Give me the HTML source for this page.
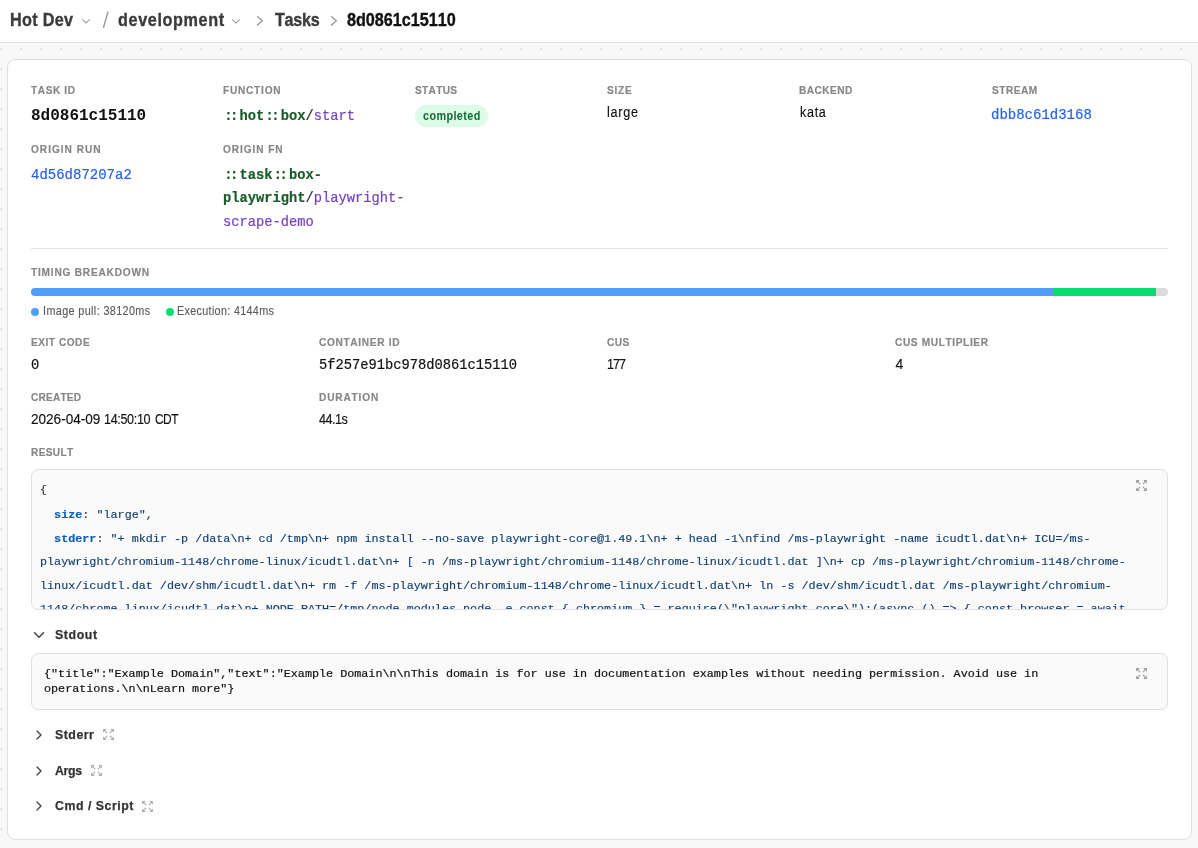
<!DOCTYPE html>
<html><head><meta charset="utf-8">
<style>
html,body{margin:0;padding:0;}
body{width:1198px;height:848px;position:relative;overflow:hidden;background-color:#f8f8f8;
 background-image:radial-gradient(circle at 10px 10px,#e2e2e2 0,#e2e2e2 0.9px,rgba(226,226,226,0) 1.3px);
 background-size:20px 20px;background-position:11px 39px;
 font-family:"Liberation Sans",sans-serif;}
.hdr{position:absolute;left:0;top:0;width:1198px;height:42px;background:#fff;border-bottom:1px solid #e2e2e2;}
.card{position:absolute;left:7px;top:59px;width:1183px;height:779px;background:#fff;border:1px solid #dfdfdf;border-radius:8px;}
.t{position:absolute;white-space:pre;}
.t b{font-weight:700;}
.sep{position:absolute;left:31px;top:248px;width:1137px;height:1px;background:#e5e5e5;}
.badge{position:absolute;left:415px;top:105px;width:73px;height:22px;border-radius:11px;background:#dcfce7;}
.bar{position:absolute;left:31px;top:288px;width:1137px;height:8px;border-radius:4px;background:#dcdcdc;overflow:hidden;}
.bar .b1{position:absolute;left:0;top:0;width:1023px;height:8px;background:#4f9ffa;}
.bar .b2{position:absolute;left:1023px;top:0;width:102px;height:8px;background:#08de6f;}
.dot{position:absolute;width:8px;height:8px;border-radius:4px;}
.box{position:absolute;left:31px;width:1135px;background:#fafafa;border:1px solid #e0e0e0;border-radius:7px;overflow:hidden;}
.cl{position:absolute;left:8px;white-space:pre;-webkit-text-stroke:0.15px currentColor;font-family:"Liberation Mono",monospace;font-size:11.75px;line-height:23.4px;}
.cl b{font-weight:700;}
svg{position:absolute;overflow:visible;}
</style></head><body>
<div id="wrap" style="position:absolute;left:0;top:0;width:1198px;height:848px;will-change:transform;">
<div class="hdr"></div>
<svg style="left:0;top:0" width="1198" height="42" viewBox="0 0 1198 42">
  <polyline points="82.6,19.6 86,23 89.4,19.6" fill="none" stroke="#a3a3a3" stroke-width="1.1" stroke-linecap="round" stroke-linejoin="round"/>
  <line x1="107.9" y1="11.9" x2="103.6" y2="27.2" stroke="#9e9e9e" stroke-width="1.5" stroke-linecap="round"/>
  <polyline points="232.4,19.6 235.9,23.1 239.4,19.6" fill="none" stroke="#a3a3a3" stroke-width="1.1" stroke-linecap="round" stroke-linejoin="round"/>
  <polyline points="257.6,16.7 262.3,20.8 257.6,24.9" fill="none" stroke="#9e9e9e" stroke-width="1.5" stroke-linecap="round" stroke-linejoin="round"/>
  <polyline points="331.7,16.7 336.4,20.8 331.7,24.9" fill="none" stroke="#9e9e9e" stroke-width="1.5" stroke-linecap="round" stroke-linejoin="round"/>
</svg>
<div class="card"></div>
<div class="sep"></div>
<div class="badge"></div>
<div class="bar"><div class="b1"></div><div class="b2"></div></div>
<div class="dot" style="left:31px;top:308px;background:#4f9ffa"></div>
<div class="dot" style="left:166px;top:308px;background:#08de6f"></div>
<div class="box" style="top:469px;height:139px;">
<div style="position:absolute;left:0;top:0;width:1135px;height:139px;" id="codewrap">
<div class="cl" style="top:10.90px"><span style="color:#333;position:relative;top:-2px">{</span></div>
<div class="cl" style="top:34.30px">  <b style="color:#0b5cc0">size</b><span style="color:#333">:</span><span style="color:#123f6e"> &quot;large&quot;,</span></div>
<div class="cl" style="top:57.70px">  <b style="color:#0b5cc0">stderr</b><span style="color:#333">:</span><span style="color:#123f6e"> &quot;+ mkdir -p /data\n+ cd /tmp\n+ npm install --no-save playwright-core@1.49.1\n+ + head -1\nfind /ms-playwright -name icudtl.dat\n+ ICU=/ms-</span></div>
<div class="cl" style="top:81.10px"><span style="color:#123f6e">playwright/chromium-1148/chrome-linux/icudtl.dat\n+ [ -n /ms-playwright/chromium-1148/chrome-linux/icudtl.dat ]\n+ cp /ms-playwright/chromium-1148/chrome-</span></div>
<div class="cl" style="top:104.50px"><span style="color:#123f6e">linux/icudtl.dat /dev/shm/icudtl.dat\n+ rm -f /ms-playwright/chromium-1148/chrome-linux/icudtl.dat\n+ ln -s /dev/shm/icudtl.dat /ms-playwright/chromium-</span></div>
<div class="cl" style="top:127.90px"><span style="color:#123f6e">1148/chrome-linux/icudtl.dat\n+ NODE_PATH=/tmp/node_modules node -e const { chromium } = require(\&quot;playwright-core\&quot;);(async () =&gt; { const browser = await</span></div>
</div>
</div>
<div class="box" style="top:653px;height:55px;"></div>
<svg style="left:1135.35px;top:479.25px" width="13" height="13" viewBox="0 0 24 24" fill="none" stroke="#9a9a9a" stroke-width="1.9" stroke-linecap="round" stroke-linejoin="round"><path d="m21 21-6-6m6 6v-4m0 4h-4"/><path d="M3 17V21m0 0h4M3 21l6-6"/><path d="M21 7V3m0 0h-4M21 3l-6 6"/><path d="M3 7V3m0 0h4M3 3l6 6"/></svg>
<svg style="left:1135.3px;top:667.2px" width="13" height="13" viewBox="0 0 24 24" fill="none" stroke="#9a9a9a" stroke-width="1.9" stroke-linecap="round" stroke-linejoin="round"><path d="m21 21-6-6m6 6v-4m0 4h-4"/><path d="M3 17V21m0 0h4M3 21l6-6"/><path d="M21 7V3m0 0h-4M21 3l-6 6"/><path d="M3 7V3m0 0h4M3 3l6 6"/></svg>
<svg style="left:29.9px;top:626px" width="18" height="18" viewBox="0 0 24 24" fill="none" stroke="#444" stroke-width="2" stroke-linecap="round" stroke-linejoin="round"><path d="m6 9 6 6 6-6"/></svg>
<svg style="left:31.15px;top:726.75px" width="16" height="16" viewBox="0 0 24 24" fill="none" stroke="#444" stroke-width="2" stroke-linecap="round" stroke-linejoin="round"><path d="m9 18 6-6-6-6"/></svg>
<svg style="left:31.15px;top:762.7px" width="16" height="16" viewBox="0 0 24 24" fill="none" stroke="#444" stroke-width="2" stroke-linecap="round" stroke-linejoin="round"><path d="m9 18 6-6-6-6"/></svg>
<svg style="left:31.15px;top:797.8px" width="16" height="16" viewBox="0 0 24 24" fill="none" stroke="#444" stroke-width="2" stroke-linecap="round" stroke-linejoin="round"><path d="m9 18 6-6-6-6"/></svg>
<svg style="left:102.4px;top:728.4px" width="13" height="13" viewBox="0 0 24 24" fill="none" stroke="#ababab" stroke-width="1.9" stroke-linecap="round" stroke-linejoin="round"><path d="m21 21-6-6m6 6v-4m0 4h-4"/><path d="M3 17V21m0 0h4M3 21l6-6"/><path d="M21 7V3m0 0h-4M21 3l-6 6"/><path d="M3 7V3m0 0h4M3 3l6 6"/></svg>
<svg style="left:90.25px;top:764.2px" width="13" height="13" viewBox="0 0 24 24" fill="none" stroke="#ababab" stroke-width="1.9" stroke-linecap="round" stroke-linejoin="round"><path d="m21 21-6-6m6 6v-4m0 4h-4"/><path d="M3 17V21m0 0h4M3 21l6-6"/><path d="M21 7V3m0 0h-4M21 3l-6 6"/><path d="M3 7V3m0 0h4M3 3l6 6"/></svg>
<svg style="left:141.35px;top:799.5px" width="13" height="13" viewBox="0 0 24 24" fill="none" stroke="#ababab" stroke-width="1.9" stroke-linecap="round" stroke-linejoin="round"><path d="m21 21-6-6m6 6v-4m0 4h-4"/><path d="M3 17V21m0 0h4M3 21l6-6"/><path d="M21 7V3m0 0h-4M21 3l-6 6"/><path d="M3 7V3m0 0h4M3 3l6 6"/></svg>
<div class="t" id="e1" style="left:10.32px;top:9.00px;font-family:'Liberation Sans', sans-serif;font-size:18px;line-height:22px;font-weight:700;color:#3b3b3b;letter-spacing:0.342px;transform:scaleX(0.9);transform-origin:0 0;font-kerning:none;-webkit-text-stroke:0.35px currentColor;">Hot Dev</div>
<div class="t" id="e2" style="left:117.74px;top:9.00px;font-family:'Liberation Sans', sans-serif;font-size:18px;line-height:22px;font-weight:700;color:#3b3b3b;letter-spacing:0.682px;transform:scaleX(0.9);transform-origin:0 0;font-kerning:none;-webkit-text-stroke:0.35px currentColor;">development</div>
<div class="t" id="e3" style="left:275.22px;top:9.00px;font-family:'Liberation Sans', sans-serif;font-size:18px;line-height:22px;font-weight:700;color:#3b3b3b;letter-spacing:-0.358px;transform:scaleX(0.9);transform-origin:0 0;font-kerning:none;-webkit-text-stroke:0.35px currentColor;">Tasks</div>
<div class="t" id="e4" style="left:346.99px;top:9.00px;font-family:'Liberation Sans', sans-serif;font-size:18px;line-height:22px;font-weight:700;color:#111;letter-spacing:-0.033px;transform:scaleX(0.9);transform-origin:0 0;font-kerning:none;-webkit-text-stroke:0.35px currentColor;">8d0861c15110</div>
<div class="t" id="e5" style="left:31.29px;top:82.71px;font-family:'Liberation Sans', sans-serif;font-size:11.5px;line-height:14px;font-weight:700;color:#878787;letter-spacing:0.655px;transform:scaleX(0.88);transform-origin:0 0;font-kerning:none;-webkit-text-stroke:0.2px currentColor;">TASK ID</div>
<div class="t" id="e6" style="left:223.12px;top:82.71px;font-family:'Liberation Sans', sans-serif;font-size:11.5px;line-height:14px;font-weight:700;color:#878787;letter-spacing:0.857px;transform:scaleX(0.88);transform-origin:0 0;font-kerning:none;-webkit-text-stroke:0.2px currentColor;">FUNCTION</div>
<div class="t" id="e7" style="left:415.01px;top:82.71px;font-family:'Liberation Sans', sans-serif;font-size:11.5px;line-height:14px;font-weight:700;color:#878787;letter-spacing:0.365px;transform:scaleX(0.88);transform-origin:0 0;font-kerning:none;-webkit-text-stroke:0.2px currentColor;">STATUS</div>
<div class="t" id="e8" style="left:607.21px;top:82.71px;font-family:'Liberation Sans', sans-serif;font-size:11.5px;line-height:14px;font-weight:700;color:#878787;letter-spacing:0.869px;transform:scaleX(0.88);transform-origin:0 0;font-kerning:none;-webkit-text-stroke:0.2px currentColor;">SIZE</div>
<div class="t" id="e9" style="left:799.32px;top:82.71px;font-family:'Liberation Sans', sans-serif;font-size:11.5px;line-height:14px;font-weight:700;color:#878787;letter-spacing:0.493px;transform:scaleX(0.88);transform-origin:0 0;font-kerning:none;-webkit-text-stroke:0.2px currentColor;">BACKEND</div>
<div class="t" id="e10" style="left:991.51px;top:82.71px;font-family:'Liberation Sans', sans-serif;font-size:11.5px;line-height:14px;font-weight:700;color:#878787;letter-spacing:0.577px;transform:scaleX(0.88);transform-origin:0 0;font-kerning:none;-webkit-text-stroke:0.2px currentColor;">STREAM</div>
<div class="t" id="e11" style="left:31.08px;top:142.40px;font-family:'Liberation Sans', sans-serif;font-size:11.5px;line-height:14px;font-weight:700;color:#878787;letter-spacing:1.121px;transform:scaleX(0.88);transform-origin:0 0;font-kerning:none;-webkit-text-stroke:0.2px currentColor;">ORIGIN RUN</div>
<div class="t" id="e12" style="left:223.08px;top:142.40px;font-family:'Liberation Sans', sans-serif;font-size:11.5px;line-height:14px;font-weight:700;color:#878787;letter-spacing:1.039px;transform:scaleX(0.88);transform-origin:0 0;font-kerning:none;-webkit-text-stroke:0.2px currentColor;">ORIGIN FN</div>
<div class="t" id="e13" style="left:30.99px;top:265.00px;font-family:'Liberation Sans', sans-serif;font-size:11.5px;line-height:14px;font-weight:700;color:#878787;letter-spacing:0.897px;transform:scaleX(0.88);transform-origin:0 0;font-kerning:none;-webkit-text-stroke:0.2px currentColor;">TIMING BREAKDOWN</div>
<div class="t" id="e14" style="left:31.02px;top:335.21px;font-family:'Liberation Sans', sans-serif;font-size:11.5px;line-height:14px;font-weight:700;color:#878787;letter-spacing:0.587px;transform:scaleX(0.88);transform-origin:0 0;font-kerning:none;-webkit-text-stroke:0.2px currentColor;">EXIT CODE</div>
<div class="t" id="e15" style="left:319.08px;top:335.21px;font-family:'Liberation Sans', sans-serif;font-size:11.5px;line-height:14px;font-weight:700;color:#878787;letter-spacing:0.759px;transform:scaleX(0.88);transform-origin:0 0;font-kerning:none;-webkit-text-stroke:0.2px currentColor;">CONTAINER ID</div>
<div class="t" id="e16" style="left:607.08px;top:335.21px;font-family:'Liberation Sans', sans-serif;font-size:11.5px;line-height:14px;font-weight:700;color:#878787;letter-spacing:0.536px;transform:scaleX(0.88);transform-origin:0 0;font-kerning:none;-webkit-text-stroke:0.2px currentColor;">CUS</div>
<div class="t" id="e17" style="left:895.38px;top:335.21px;font-family:'Liberation Sans', sans-serif;font-size:11.5px;line-height:14px;font-weight:700;color:#878787;letter-spacing:0.711px;transform:scaleX(0.88);transform-origin:0 0;font-kerning:none;-webkit-text-stroke:0.2px currentColor;">CUS MULTIPLIER</div>
<div class="t" id="e18" style="left:31.28px;top:390.00px;font-family:'Liberation Sans', sans-serif;font-size:11.5px;line-height:14px;font-weight:700;color:#878787;letter-spacing:0.213px;transform:scaleX(0.88);transform-origin:0 0;font-kerning:none;-webkit-text-stroke:0.2px currentColor;">CREATED</div>
<div class="t" id="e19" style="left:318.82px;top:390.00px;font-family:'Liberation Sans', sans-serif;font-size:11.5px;line-height:14px;font-weight:700;color:#878787;letter-spacing:0.950px;transform:scaleX(0.88);transform-origin:0 0;font-kerning:none;-webkit-text-stroke:0.2px currentColor;">DURATION</div>
<div class="t" id="e20" style="left:31.02px;top:445.21px;font-family:'Liberation Sans', sans-serif;font-size:11.5px;line-height:14px;font-weight:700;color:#878787;letter-spacing:0.388px;transform:scaleX(0.88);transform-origin:0 0;font-kerning:none;-webkit-text-stroke:0.2px currentColor;">RESULT</div>
<div class="t" id="e21" style="left:31.00px;top:105.71px;font-family:'Liberation Mono', monospace;font-size:16px;line-height:20px;font-weight:700;color:#111;">8d0861c15110</div>
<div class="t" id="e22" style="left:223.00px;top:108.00px;font-family:'Liberation Mono', monospace;font-size:13.75px;line-height:17px;font-weight:400;color:#1a5c2a;-webkit-text-stroke:0.2px currentColor;"><span style="color:#1a5c2a"><b style="position:relative;left:1.3px">:</b><b style="position:relative;left:-1.3px">:</b></span><b style="color:#1a5c2a">hot</b><span style="color:#1a5c2a"><b style="position:relative;left:1.3px">:</b><b style="position:relative;left:-1.3px">:</b></span><b style="color:#1a5c2a">box</b><span style="color:#333">/</span><span style="color:#7443c4">start</span></div>
<div class="t" id="e23" style="left:422.68px;top:108.50px;font-family:'Liberation Sans', sans-serif;font-size:12px;line-height:15px;font-weight:700;color:#146a34;letter-spacing:0.448px;transform:scaleX(0.9);transform-origin:0 0;font-kerning:none;">completed</div>
<div class="t" id="e24" style="left:607.05px;top:102.71px;font-family:'Liberation Sans', sans-serif;font-size:14px;line-height:18px;font-weight:400;color:#111;letter-spacing:0.859px;transform:scaleX(0.9);transform-origin:0 0;font-kerning:none;-webkit-text-stroke:0.15px currentColor;">large</div>
<div class="t" id="e25" style="left:799.55px;top:102.71px;font-family:'Liberation Sans', sans-serif;font-size:14px;line-height:18px;font-weight:400;color:#111;letter-spacing:0.753px;transform:scaleX(0.9);transform-origin:0 0;font-kerning:none;-webkit-text-stroke:0.15px currentColor;">kata</div>
<div class="t" id="e26" style="left:991.00px;top:106.31px;font-family:'Liberation Mono', monospace;font-size:14px;line-height:18px;font-weight:400;color:#2463eb;-webkit-text-stroke:0.2px currentColor;">dbb8c61d3168</div>
<div class="t" id="e27" style="left:31.00px;top:166.00px;font-family:'Liberation Mono', monospace;font-size:14px;line-height:18px;font-weight:400;color:#2463eb;-webkit-text-stroke:0.2px currentColor;">4d56d87207a2</div>
<div class="t" id="e28" style="left:223.00px;top:166.50px;font-family:'Liberation Mono', monospace;font-size:13.75px;line-height:17px;font-weight:400;color:#1a5c2a;-webkit-text-stroke:0.2px currentColor;"><b style="position:relative;left:1.3px">:</b><b style="position:relative;left:-1.3px">:</b><b>task</b><b style="position:relative;left:1.3px">:</b><b style="position:relative;left:-1.3px">:</b><b>box-</b></div>
<div class="t" id="e29" style="left:223.00px;top:189.81px;font-family:'Liberation Mono', monospace;font-size:13.75px;line-height:17px;font-weight:400;color:#1a5c2a;-webkit-text-stroke:0.2px currentColor;"><b>playwright</b><span style="color:#333">/</span><span style="color:#7443c4">playwright-</span></div>
<div class="t" id="e30" style="left:223.00px;top:214.21px;font-family:'Liberation Mono', monospace;font-size:13.75px;line-height:17px;font-weight:400;color:#7443c4;-webkit-text-stroke:0.2px currentColor;">scrape-demo</div>
<div class="t" id="e31" style="left:42.80px;top:303.81px;font-family:'Liberation Sans', sans-serif;font-size:12px;line-height:15px;font-weight:400;color:#5c5c5c;letter-spacing:0.422px;transform:scaleX(0.9);transform-origin:0 0;font-kerning:none;-webkit-text-stroke:0.15px currentColor;">Image pull: 38120ms</div>
<div class="t" id="e32" style="left:177.11px;top:304.00px;font-family:'Liberation Sans', sans-serif;font-size:12px;line-height:15px;font-weight:400;color:#5c5c5c;letter-spacing:0.349px;transform:scaleX(0.9);transform-origin:0 0;font-kerning:none;-webkit-text-stroke:0.15px currentColor;">Execution: 4144ms</div>
<div class="t" id="e33" style="left:31.00px;top:356.81px;font-family:'Liberation Mono', monospace;font-size:13.75px;line-height:17px;font-weight:400;color:#111;-webkit-text-stroke:0.2px currentColor;">0</div>
<div class="t" id="e34" style="left:319.00px;top:356.90px;font-family:'Liberation Mono', monospace;font-size:13.75px;line-height:17px;font-weight:400;color:#111;-webkit-text-stroke:0.2px currentColor;">5f257e91bc978d0861c15110</div>
<div class="t" id="e35" style="left:606.74px;top:355.10px;font-family:'Liberation Sans', sans-serif;font-size:14px;line-height:18px;font-weight:400;color:#111;letter-spacing:-1.183px;transform:scaleX(0.9);transform-origin:0 0;font-kerning:none;-webkit-text-stroke:0.15px currentColor;">177</div>
<div class="t" id="e36" style="left:895.48px;top:354.60px;font-family:'Liberation Sans', sans-serif;font-size:14px;line-height:18px;font-weight:400;color:#111;-webkit-text-stroke:0.15px currentColor;">4</div>
<div class="t" id="e37" style="left:31.02px;top:409.81px;font-family:'Liberation Sans', sans-serif;font-size:14px;line-height:18px;font-weight:400;color:#111;letter-spacing:-0.016px;transform:scaleX(0.97);transform-origin:0 0;font-kerning:none;-webkit-text-stroke:0.15px currentColor;">2026-04-09</div>
<div class="t" id="e38" style="left:104.14px;top:409.81px;font-family:'Liberation Sans', sans-serif;font-size:14px;line-height:18px;font-weight:400;color:#111;letter-spacing:-0.396px;transform:scaleX(0.9);transform-origin:0 0;font-kerning:none;-webkit-text-stroke:0.15px currentColor;">14:50:10</div>
<div class="t" id="e39" style="left:154.60px;top:409.81px;font-family:'Liberation Sans', sans-serif;font-size:14px;line-height:18px;font-weight:400;color:#111;letter-spacing:-0.576px;transform:scaleX(0.85);transform-origin:0 0;font-kerning:none;-webkit-text-stroke:0.15px currentColor;">CDT</div>
<div class="t" id="e40" style="left:319.21px;top:409.71px;font-family:'Liberation Sans', sans-serif;font-size:14px;line-height:18px;font-weight:400;color:#111;letter-spacing:-0.550px;transform:scaleX(0.9);transform-origin:0 0;font-kerning:none;-webkit-text-stroke:0.15px currentColor;">44.1s</div>
<div class="t" id="e41" style="left:44.00px;top:667.00px;font-family:'Liberation Mono', monospace;font-size:11.75px;line-height:15px;font-weight:400;color:#111;-webkit-text-stroke:0.2px currentColor;">{&quot;title&quot;:&quot;Example Domain&quot;,&quot;text&quot;:&quot;Example Domain\n\nThis domain is for use in documentation examples without needing permission. Avoid use in</div>
<div class="t" id="e42" style="left:44.00px;top:682.00px;font-family:'Liberation Mono', monospace;font-size:11.75px;line-height:15px;font-weight:400;color:#111;-webkit-text-stroke:0.2px currentColor;">operations.\n\nLearn more&quot;}</div>
<div class="t" id="e43" style="left:54.64px;top:626.50px;font-family:'Liberation Sans', sans-serif;font-size:13px;line-height:16px;font-weight:700;color:#333;letter-spacing:0.613px;transform:scaleX(0.95);transform-origin:0 0;font-kerning:none;-webkit-text-stroke:0.25px currentColor;">Stdout</div>
<div class="t" id="e44" style="left:54.74px;top:726.90px;font-family:'Liberation Sans', sans-serif;font-size:13px;line-height:16px;font-weight:700;color:#333;letter-spacing:0.520px;transform:scaleX(0.95);transform-origin:0 0;font-kerning:none;-webkit-text-stroke:0.25px currentColor;">Stderr</div>
<div class="t" id="e45" style="left:54.79px;top:762.81px;font-family:'Liberation Sans', sans-serif;font-size:13px;line-height:16px;font-weight:700;color:#333;letter-spacing:-0.359px;transform:scaleX(0.95);transform-origin:0 0;font-kerning:none;-webkit-text-stroke:0.25px currentColor;">Args</div>
<div class="t" id="e46" style="left:54.59px;top:797.90px;font-family:'Liberation Sans', sans-serif;font-size:13px;line-height:16px;font-weight:700;color:#333;letter-spacing:0.547px;transform:scaleX(0.95);transform-origin:0 0;font-kerning:none;-webkit-text-stroke:0.25px currentColor;">Cmd / Script</div>
</div>
</body></html>
